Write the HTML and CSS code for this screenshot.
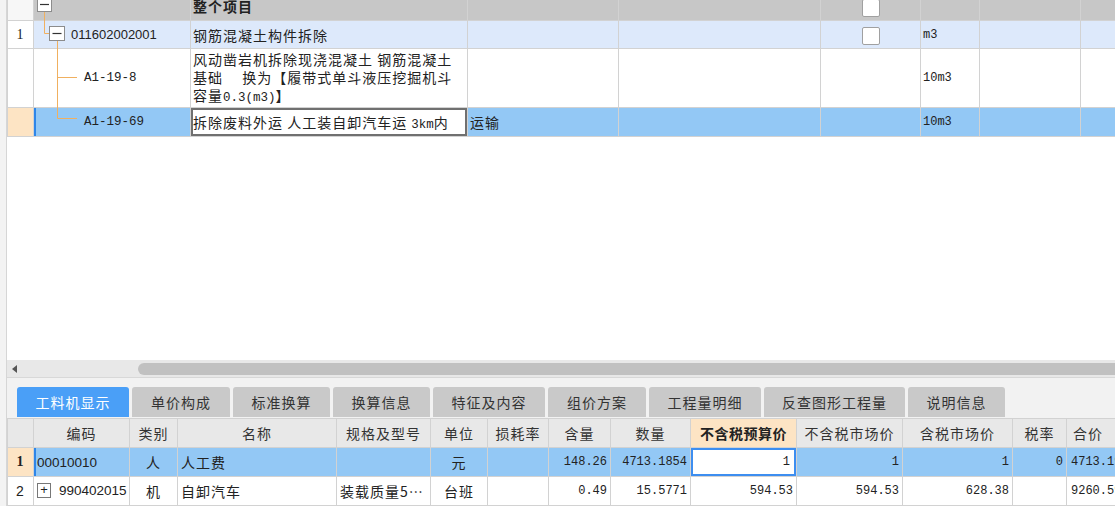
FILE: index.html
```html
<!DOCTYPE html>
<html lang="zh-CN">
<head>
    <meta charset="UTF-8">
    <title>工料机显示</title>
    <link rel="stylesheet" href="styles.css">
</head>
<body>
<div class="app">
    <div class="side"></div>
    <div class="main">

        <!-- 上部：清单/定额树 -->
        <div class="upper">
            <table class="tree-grid">
                <colgroup>
                    <col class="t-no"><col class="t-code"><col class="t-name"><col class="t-c4">
                    <col class="t-c5"><col class="t-chk"><col class="t-unit"><col class="t-c8"><col class="t-c9">
                </colgroup>
                <tr class="tg-head">
                    <td class="no"></td>
                    <td></td>
                    <td class="name bold">整个项目</td>
                    <td></td>
                    <td></td>
                    <td class="center"><span class="chk"></span></td>
                    <td></td>
                    <td></td>
                    <td></td>
                </tr>
                <tr class="tg-bill">
                    <td class="no">1</td>
                    <td class="code lvl1">011602002001</td>
                    <td class="name">钢筋混凝土构件拆除</td>
                    <td></td>
                    <td></td>
                    <td class="center"><span class="chk"></span></td>
                    <td class="mono">m3</td>
                    <td></td>
                    <td></td>
                </tr>
                <tr class="tg-quota">
                    <td class="no"></td>
                    <td class="code lvl2 mono">A1-19-8</td>
                    <td class="name multi">风动凿岩机拆除现浇混凝土 钢筋混凝土<br>基础　 换为【履带式单斗液压挖掘机斗<br>容量<span class="mono-in">0.3(m3)</span>】</td>
                    <td></td>
                    <td></td>
                    <td></td>
                    <td class="mono">10m3</td>
                    <td></td>
                    <td></td>
                </tr>
                <tr class="tg-quota selected">
                    <td class="no current"></td>
                    <td class="code lvl2 mono marker">A1-19-69</td>
                    <td class="name editing">拆除废料外运 人工装自卸汽车运 <span class="mono-in">3km</span>内</td>
                    <td class="name">运输</td>
                    <td></td>
                    <td></td>
                    <td class="mono">10m3</td>
                    <td></td>
                    <td></td>
                </tr>
            </table>

            <!-- 树形连接线 -->
            <svg class="tree-lines" width="80" height="140" viewBox="0 0 80 140">
                <g stroke="#f0b060" stroke-width="1" fill="none">
                    <path d="M37.5 12 V33.5 H42"/>
                    <path d="M50.5 41 V118.5 H70 M50.5 77.5 H70"/>
                </g>
                <g stroke="#8c8c8c" fill="#fff">
                    <rect x="30.5" y="-3.5" width="14" height="15"/>
                    <rect x="42.5" y="26.5" width="15" height="14"/>
                </g>
                <g stroke="#333" stroke-width="1.2">
                    <path d="M33 4.5 H42"/>
                    <path d="M45.5 33.5 H54.5"/>
                </g>
            </svg>
        </div>

        <div class="hscroll">
            <span class="arrow-left"></span>
            <span class="thumb"></span>
        </div>

        <!-- 下部：工料机 -->
        <div class="lower">
            <div class="tabs">
                <div class="tab active w112">工料机显示</div>
                <div class="tab w98">单价构成</div>
                <div class="tab w97">标准换算</div>
                <div class="tab w97">换算信息</div>
                <div class="tab w113">特征及内容</div>
                <div class="tab w98">组价方案</div>
                <div class="tab w112">工程量明细</div>
                <div class="tab w141">反查图形工程量</div>
                <div class="tab w97">说明信息</div>
            </div>
            <table class="res-grid">
                <colgroup>
                    <col class="r-no"><col class="r-code"><col class="r-type"><col class="r-name"><col class="r-spec">
                    <col class="r-unit"><col class="r-loss"><col class="r-qty"><col class="r-amt"><col class="r-pre">
                    <col class="r-mkt"><col class="r-mktt"><col class="r-tax"><col class="r-sum">
                </colgroup>
                <tr class="rg-head">
                    <td></td>
                    <td>编码</td>
                    <td>类别</td>
                    <td>名称</td>
                    <td>规格及型号</td>
                    <td>单位</td>
                    <td>损耗率</td>
                    <td>含量</td>
                    <td>数量</td>
                    <td class="focus-head">不含税预算价</td>
                    <td>不含税市场价</td>
                    <td>含税市场价</td>
                    <td>税率</td>
                    <td class="left">合价</td>
                </tr>
                <tr class="selected">
                    <td class="no current">1</td>
                    <td class="code marker">00010010</td>
                    <td class="center">人</td>
                    <td>人工费</td>
                    <td></td>
                    <td class="center">元</td>
                    <td></td>
                    <td class="num">148.26</td>
                    <td class="num">4713.1854</td>
                    <td class="num editing">1</td>
                    <td class="num">1</td>
                    <td class="num">1</td>
                    <td class="num">0</td>
                    <td class="num-l">4713.19</td>
                </tr>
                <tr>
                    <td class="no">2</td>
                    <td class="code"><span class="plus">+</span>990402015</td>
                    <td class="center">机</td>
                    <td>自卸汽车</td>
                    <td class="clip">装载质量5…</td>
                    <td class="center">台班</td>
                    <td></td>
                    <td class="num">0.49</td>
                    <td class="num">15.5771</td>
                    <td class="num">594.53</td>
                    <td class="num">594.53</td>
                    <td class="num">628.38</td>
                    <td></td>
                    <td class="num-l">9260.59</td>
                </tr>
            </table>
        </div>
    </div>
</div>
</body>
</html>
```

FILE: styles.css
```css
body {
    margin: 0;
    padding: 0;
    width: 1115px;
    height: 506px;
    overflow: hidden;
    background: #fff;
    color: #222;
    font-family: "Noto Sans CJK SC", "Liberation Sans", sans-serif;
    font-size: 14px;
}

.app {
    display: flex;
    height: 506px;
}

.side {
    width: 6px;
    flex: none;
    background: #f3f3f3;
    border-right: 1px solid #d6d6d6;
}

.main {
    flex: 1;
    display: flex;
    flex-direction: column;
    min-width: 0;
}

/* ---------- 上部表格 ---------- */
.upper {
    position: relative;
    height: 361px;
    overflow: hidden;
    background: #fff;
}

table {
    border-collapse: collapse;
    table-layout: fixed;
}

td {
    border: 1px solid #d2d2d2;
    padding: 0 3px;
    white-space: nowrap;
    overflow: hidden;
    letter-spacing: 1px;
}

.tree-grid {
    width: 1173px;
    margin-top: -9px;
}
.t-no { width: 26px; }
.t-code { width: 157px; }
.t-name { width: 277px; }
.t-c4 { width: 151px; }
.t-c5 { width: 202px; }
.t-chk { width: 100px; }
.t-unit { width: 59px; }
.t-c8 { width: 101px; }
.t-c9 { width: 100px; }

.tree-grid tr { height: 28px; }
.tree-grid .tg-head { height: 29px; background: #c7c7c7; }
.tree-grid .tg-head .no { background: #f7f7f7; }
.tree-grid .tg-bill { background: #dde9fb; }
.tree-grid .tg-quota { height: 58px; background: #fff; }
.tree-grid .tg-quota.selected { height: 29px; }
.tree-grid .selected { background: #93c8f5; }

.tree-grid .no {
    background: #fff;
    text-align: center;
    font-family: "Liberation Serif", serif;
    font-size: 14px;
}
.tree-grid .no.current { background: #fde4c4; }

.bold { font-weight: bold; }
.center { text-align: center; }

.code {
    font-family: "Liberation Sans", sans-serif;
    font-size: 13px;
    letter-spacing: 0;
}
.mono {
    font-family: "Liberation Mono", monospace;
    font-size: 12px;
    letter-spacing: 0;
}
.mono-in {
    font-family: "Liberation Mono", monospace;
    font-size: 12.5px;
    letter-spacing: 0;
}
.tree-grid .mono { padding-left: 2px; }
.tree-grid .lvl1 { padding-left: 37px; }
.tree-grid .lvl2 { padding-left: 50px; font-size: 12.5px; }

.marker { box-shadow: inset 2px 0 0 #2f86e8; }

.name { padding-left: 2px; }
.name.multi {
    line-height: 18px;
    white-space: nowrap;
    padding-top: 1px;
    vertical-align: top;
}
.name.editing {
    background: #fff;
    box-shadow: inset 0 0 0 2px #707070;
}

.chk {
    display: inline-block;
    width: 16px;
    height: 16px;
    border: 1px solid #a0a0a0;
    border-radius: 2px;
    background: #fff;
    vertical-align: middle;
}

.tree-lines {
    position: absolute;
    left: 0;
    top: 0;
    overflow: visible;
}

/* ---------- 横向滚动条 ---------- */
.hscroll {
    height: 17px;
    flex: none;
    background: #e8e8e8;
    display: flex;
    align-items: center;
    position: relative;
}
.arrow-left {
    width: 0;
    height: 0;
    margin-left: 5px;
    border-top: 4px solid transparent;
    border-bottom: 4px solid transparent;
    border-right: 5px solid #555;
}
.thumb {
    margin-left: 121px;
    flex: 1;
    height: 12px;
    background: #c1c1c1;
    border-radius: 6px 0 0 6px;
}

/* ---------- 下部 ---------- */
.lower {
    flex: 1;
    background: #f2f2f2;
    border-top: 1px solid #d8d8d8;
    padding-top: 9px;
}

.tabs {
    display: flex;
    gap: 3px;
    padding-left: 10px;
    height: 30px;
}
.tab {
    height: 30px;
    line-height: 30px;
    text-align: center;
    background: #c9c9c9;
    color: #333;
    border-radius: 3px 3px 0 0;
    letter-spacing: 1px;
}
.tab.active {
    background: #4a9ff7;
    color: #fff;
}
.w97 { width: 97px; }
.w98 { width: 98px; }
.w112 { width: 112px; }
.w113 { width: 112px; }
.w141 { width: 141px; }

.res-grid {
    width: 1153px;
    background: #fff;
    margin-top: 1px;
}
.r-no { width: 26px; }
.r-code { width: 96px; }
.r-type { width: 48px; }
.r-name { width: 159px; }
.r-spec { width: 94px; }
.r-unit { width: 57px; }
.r-loss { width: 61px; }
.r-qty { width: 62px; }
.r-amt { width: 80px; }
.r-pre { width: 106px; }
.r-mkt { width: 106px; }
.r-mktt { width: 110px; }
.r-tax { width: 54px; }
.r-sum { width: 94px; }

.res-grid tr { height: 29px; }
.res-grid .rg-head td {
    background: #e8e8e8;
    text-align: center;
    color: #333;
}
.res-grid .rg-head .focus-head {
    background: #fde4c4;
    font-weight: bold;
    color: #222;
    letter-spacing: 0.5px;
}
.res-grid .rg-head .left { text-align: left; padding-left: 6px; }
.res-grid .selected td { background: #93c8f5; }
.res-grid .no {
    text-align: center;
    font-family: "Liberation Sans", sans-serif;
    font-size: 14px;
}
.res-grid .selected .no.current {
    background: #fde4c4;
    font-family: "Liberation Serif", serif;
    font-weight: bold;
}
.res-grid .code { padding-left: 3px; font-size: 13.5px; }
.res-grid .clip { overflow: hidden; }
.num {
    text-align: right;
    font-family: "Liberation Mono", monospace;
    font-size: 12px;
    letter-spacing: 0;
}
.num-l {
    font-family: "Liberation Mono", monospace;
    font-size: 12px;
    letter-spacing: 0;
    padding-left: 4px;
}
.res-grid .selected .editing {
    background: #fff;
    box-shadow: inset 0 0 0 2px #3d8ef0;
    padding-right: 6px;
}

.plus {
    display: inline-block;
    width: 12px;
    height: 13px;
    line-height: 12px;
    border: 1px solid #777;
    text-align: center;
    font-size: 13px;
    margin-right: 8px;
    vertical-align: middle;
    position: relative;
    top: -1px;
}
```
